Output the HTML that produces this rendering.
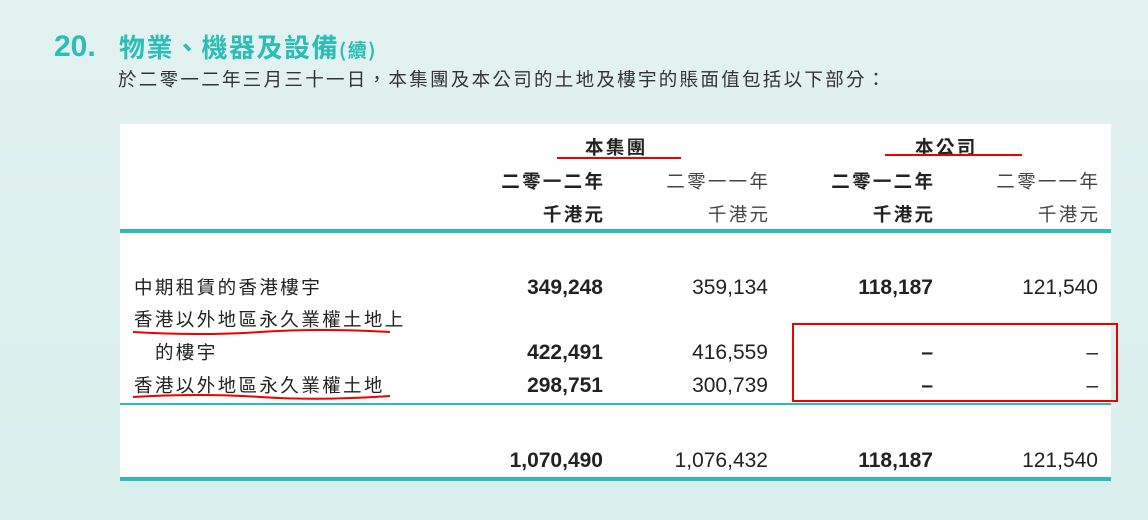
<!DOCTYPE html>
<html><head><meta charset="utf-8"><style>
body{margin:0;width:1148px;height:520px;overflow:hidden;background:linear-gradient(#e2f2f1,#d9eeec);font-family:"Liberation Sans","Noto Sans CJK TC",sans-serif;position:relative;color:#222}
.a{position:absolute;white-space:nowrap}
.r{text-align:right}
.b{font-weight:bold}
.n{font-size:21px}
.c{font-size:18.5px;letter-spacing:2.4px}
.cr{font-size:18.5px;letter-spacing:2.3px;margin-right:-2.3px}
</style></head><body>
<div class="a b" style="left:54px;top:30px;font-size:30px;color:#2bbdb6">20.</div>
<div class="a b" style="left:119px;top:28px;font-size:26px;letter-spacing:1.5px;color:#2bbdb6;font-family:'Noto Sans CJK TC',sans-serif">物業、機器及設備<span style="font-size:19px">(續)</span></div>
<div class="a" style="left:118px;top:66px;font-size:18.5px;color:#333;letter-spacing:2.3px">於二零一二年三月三十一日，本集團及本公司的土地及樓宇的賬面值包括以下部分：</div>
<div class="a" style="left:120px;top:124px;width:991px;height:357px;background:#fff"></div>
<div class="a" style="left:120px;top:229px;width:991px;height:4px;background:#2bbdb6"></div>
<div class="a" style="left:120px;top:403px;width:991px;height:2px;background:#2bbdb6"></div>
<div class="a" style="left:120px;top:477px;width:991px;height:4px;background:#2bbdb6"></div>
<div class="a b c" style="left:585px;top:134px">本集團</div>
<div class="a b c" style="left:915px;top:134px">本公司</div>
<div class="a" style="left:557px;top:157px;width:124px;height:2px;background:#e00"></div>
<div class="a" style="left:885px;top:154px;width:137px;height:2px;background:#e00"></div>
<div class="a cr b r" style="right:545px;top:168px">二零一二年</div>
<div class="a cr r" style="right:380px;top:168px;color:#444">二零一一年</div>
<div class="a cr b r" style="right:215px;top:168px">二零一二年</div>
<div class="a cr r" style="right:50px;top:168px;color:#444">二零一一年</div>
<div class="a cr b r" style="right:545px;top:201px">千港元</div>
<div class="a cr r" style="right:380px;top:201px;color:#444">千港元</div>
<div class="a cr b r" style="right:215px;top:201px">千港元</div>
<div class="a cr r" style="right:50px;top:201px;color:#444">千港元</div>
<div class="a c" style="left:134px;top:274px">中期租賃的香港樓宇</div>
<div class="a c" style="left:134px;top:306px">香港以外地區永久業權土地上</div>
<div class="a c" style="left:155px;top:339px">的樓宇</div>
<div class="a c" style="left:134px;top:372px">香港以外地區永久業權土地</div>
<svg class="a" style="left:0;top:0" width="1148" height="520"><path d="M133 332 Q200 336 260 332 T390 332" stroke="#e00" stroke-width="2" fill="none"/><path d="M133 397 Q200 393 260 397 T390 396" stroke="#e00" stroke-width="2" fill="none"/><rect x="793" y="324" width="324" height="77" stroke="#e00" stroke-width="2" fill="none"/></svg>
<div class="a n b r" style="right:545px;top:276px">349,248</div>
<div class="a n r" style="right:380px;top:276px">359,134</div>
<div class="a n b r" style="right:215px;top:276px">118,187</div>
<div class="a n r" style="right:50px;top:276px">121,540</div>
<div class="a n b r" style="right:545px;top:341px">422,491</div>
<div class="a n r" style="right:380px;top:341px">416,559</div>
<div class="a n b r" style="right:215px;top:341px">–</div>
<div class="a n r" style="right:50px;top:341px">–</div>
<div class="a n b r" style="right:545px;top:374px">298,751</div>
<div class="a n r" style="right:380px;top:374px">300,739</div>
<div class="a n b r" style="right:215px;top:374px">–</div>
<div class="a n r" style="right:50px;top:374px">–</div>
<div class="a n b r" style="right:545px;top:449px">1,070,490</div>
<div class="a n r" style="right:380px;top:449px">1,076,432</div>
<div class="a n b r" style="right:215px;top:449px">118,187</div>
<div class="a n r" style="right:50px;top:449px">121,540</div>
</body></html>
